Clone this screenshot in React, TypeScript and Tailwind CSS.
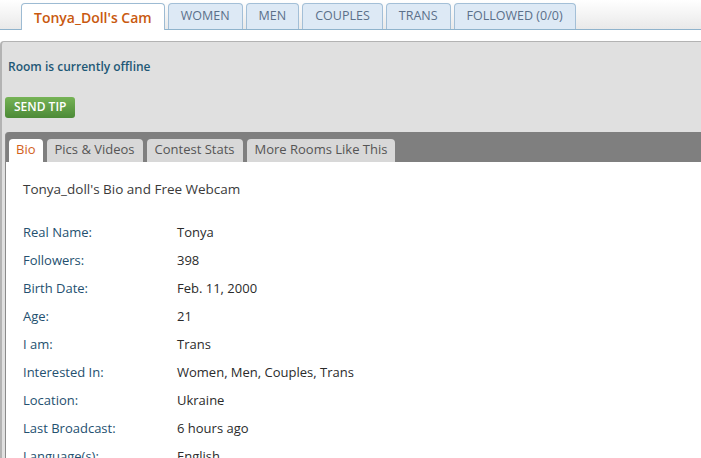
const TOP_TABS = ['WOMEN', 'MEN', 'COUPLES', 'TRANS', 'FOLLOWED (0/0)']
const ROOM_TABS = ['Pics & Videos', 'Contest Stats', 'More Rooms Like This']

const BIO = [
  { label: 'Real Name:', value: 'Tonya' },
  { label: 'Followers:', value: '398' },
  { label: 'Birth Date:', value: 'Feb. 11, 2000' },
  { label: 'Age:', value: '21' },
  { label: 'I am:', value: 'Trans' },
  { label: 'Interested In:', value: 'Women, Men, Couples, Trans' },
  { label: 'Location:', value: 'Ukraine' },
  { label: 'Last Broadcast:', value: '6 hours ago' },
  { label: 'Language(s):', value: 'English' },
]

export default function App() {
  return (
    <div className="w-[701px] h-[458px] overflow-hidden bg-white font-['Open_Sans',sans-serif]">
      {/* Site tabs */}
      <div className="h-[30px] bg-gradient-to-b from-white to-[#e9e9e9] border-b border-[#8fb3cc] flex items-end pl-[21px] gap-[3px]">
        <div className="h-[27px] -mb-px px-3 flex items-center bg-white border border-b-0 border-[#9dbbd3] rounded-t-[4px] text-[14px] font-semibold text-[#c9590f]">
          Tonya_Doll's Cam
        </div>
        {TOP_TABS.map((tab) => (
          <div
            key={tab}
            className="h-[26px] px-3 flex items-center bg-[#dde9f5] border border-b-0 border-[#a3bfd7] rounded-t-[4px] text-[12.5px] text-[#5b708a]"
          >
            {tab}
          </div>
        ))}
      </div>

      <div className="h-[11px]" />

      {/* Room panel */}
      <div className="bg-[#e0e0e0] border-t border-l-2 border-[#b3b3b3] rounded-tl-[4px] pl-[3px]">
        <p className="pt-[16px] pl-[3px] text-[12px] font-semibold text-[#1e5876] leading-[18px]">Room is currently offline</p>
        <div className="pt-[17px]">
          <button className="h-[21px] px-[9px] rounded-[3px] bg-gradient-to-b from-[#76b356] to-[#4c8a37] text-white text-[12px] font-semibold leading-none">
            SEND TIP
          </button>
        </div>

        <div className="mt-[14px] bg-[#7f7f7f] rounded-tl-[4px] border-l border-[#8a8a8a]">
          <div className="flex items-end gap-[4px] pl-[3px] pt-[7px]">
            <div className="h-[23px] px-[7px] flex items-center bg-white rounded-t-[4px] text-[13px] text-[#d2601a]">Bio</div>
            {ROOM_TABS.map((tab) => (
              <div key={tab} className="h-[23px] px-[8px] flex items-center bg-[#d8d8d8] rounded-t-[4px] text-[13px] text-[#555555]">
                {tab}
              </div>
            ))}
          </div>

          <div className="bg-white pl-[17px] pt-[17px] pb-6">
            <h2 className="text-[13.5px] text-[#3a3a3a] leading-[20px]">Tonya_doll's Bio and Free Webcam</h2>
            <div className="mt-[19px] flex flex-col">
              {BIO.map((row) => (
                <div key={row.label} className="flex h-[28px] items-center text-[13px] leading-[18px]">
                  <span className="w-[154px] text-[#24506f]">{row.label}</span>
                  <span className="text-[#2b2b2b]">{row.value}</span>
                </div>
              ))}
            </div>
          </div>
        </div>
      </div>
    </div>
  )
}
